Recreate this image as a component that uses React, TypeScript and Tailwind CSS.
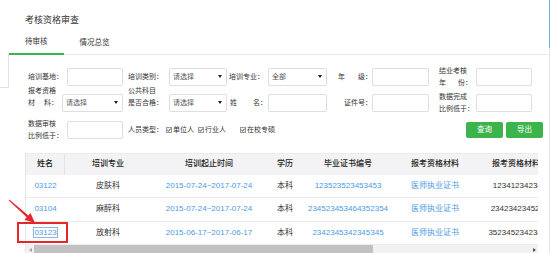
import React from 'react';

type Row = {
  name: string;
  major: string;
  period: string;
  edu: string;
  cert: string;
  material: string;
  materialNo: string;
};

const rows: Row[] = [
  { name: '03122', major: '皮肤科', period: '2015-07-24~2017-07-24', edu: '本科', cert: '123523523453453', material: '医师执业证书', materialNo: '12341234234523' },
  { name: '03104', major: '麻醉科', period: '2015-07-24~2017-07-24', edu: '本科', cert: '234523453464352354', material: '医师执业证书', materialNo: '234234234523452' },
  { name: '03123', major: '放射科', period: '2015-06-17~2017-06-17', edu: '本科', cert: '2342345342345345', material: '医师执业证书', materialNo: '3523452342345234' },
];

function TextInput({ w }: { w: string }) {
  return <div className={`${w} h-[18px] shrink-0 rounded-[2px] border border-[#dedede] bg-white`} />;
}

function Select({ w, text }: { w: string; text: string }) {
  return (
    <div className={`${w} h-[18px] shrink-0 flex items-center justify-between rounded-[2px] border border-[#dedede] bg-white pl-[3px] pr-[4px] text-[#555]`}>
      <span>{text}</span>
      <svg width="4" height="3" viewBox="0 0 4 3">
        <path d="M0 0H4L2 3Z" fill="#222" />
      </svg>
    </div>
  );
}

// label whose first and last characters are pushed to the edges (e.g. 年    级：)
function Spread({ w, a, b }: { w: string; a: string; b: string }) {
  return (
    <div className={`${w} flex justify-between`}>
      <span>{a}</span>
      <span>{b}</span>
    </div>
  );
}

function Check({ label, className }: { label: string; className?: string }) {
  return (
    <span className={`flex items-center ${className ?? ''}`}>
      <svg width="6" height="6" viewBox="0 0 6 6" className="mr-[1px]">
        <rect x="0.5" y="0.5" width="5" height="5" fill="#f4f4f4" stroke="#9a9a9a" />
        <path d="M1.3 3 L2.5 4.2 L4.8 1.6" fill="none" stroke="#333" strokeWidth="0.9" />
      </svg>
      {label}
    </span>
  );
}

export default function App() {
  return (
    <div className="relative flex w-[550px] h-[253px] overflow-hidden bg-white text-[#333] font-[family-name:'Liberation_Sans','Noto_Sans_CJK_SC',sans-serif]">
      {/* left edge of the neighbouring panel */}
      <div className="w-[9px] shrink-0 flex flex-col">
        <div className="h-[53px]" />
        <div className="h-[35px] border-r border-b border-[#e2e2e2]" />
      </div>

      <div className="flex-1 flex flex-col">
        <div className="h-[32px] pt-[14px] pl-[16px] text-[9px] leading-[12px]">考核资格审查</div>

        <div className="flex h-[23px] border-b border-[#e8e8e8] text-[7.5px]">
          <div className="-mb-px flex h-[23px] items-center border-b-2 border-[#3ab54a] px-[16px] pb-[1px]">待审核</div>
          <div className="flex h-[22px] items-center px-[16px]">情况总览</div>
        </div>

        <div className="pl-[19px] pr-[5px] text-[7px] leading-[12px]">
          <div className="mt-[13px] flex h-[18px] items-center">
            <div className="flex w-[100px] items-center">
              <div className="w-[39px]">培训基地：</div>
              <TextInput w="w-[56px]" />
            </div>
            <div className="flex w-[101px] items-center">
              <div className="w-[41px]">培训类别：</div>
              <Select w="w-[58px]" text="请选择" />
            </div>
            <div className="flex w-[109px] items-center">
              <div className="w-[39px]">培训专业：</div>
              <Select w="w-[59px]" text="全部" />
            </div>
            <div className="flex w-[101px] items-center">
              <Spread w="w-[34px]" a="年" b="级：" />
              <TextInput w="w-[57px]" />
            </div>
            <div className="flex items-center">
              <div className="w-[37px]">
                <div>结业考核</div>
                <Spread w="w-[33px]" a="年" b="份：" />
              </div>
              <TextInput w="w-[56px]" />
            </div>
          </div>

          <div className="mt-[8px] flex h-[18px] items-center">
            <div className="flex w-[100px] items-center">
              <div className="-mt-[12px] w-[34px]">
                <div>报考资格</div>
                <Spread w="w-[30px]" a="材" b="料：" />
              </div>
              <Select w="w-[61px]" text="请选择" />
            </div>
            <div className="flex w-[101px] items-center">
              <div className="-mt-[12px] w-[41px]">
                <div>公共科目</div>
                <div>是否合格：</div>
              </div>
              <Select w="w-[58px]" text="请选择" />
            </div>
            <div className="flex w-[109px] items-center">
              <div className="w-[39px] pl-[1px] pr-[1px]">
                <Spread w="w-[37px]" a="姓" b="名：" />
              </div>
              <TextInput w="w-[59px]" />
            </div>
            <div className="flex w-[101px] items-center">
              <div className="w-[34px] text-right">证件号：</div>
              <TextInput w="w-[57px]" />
            </div>
            <div className="flex items-center">
              <div className="w-[37px]">
                <div>数据完成</div>
                <div>比例低于：</div>
              </div>
              <TextInput w="w-[56px]" />
            </div>
          </div>

          <div className="mt-[9px] flex h-[18px] items-center">
            <div className="flex w-[100px] items-center">
              <div className="w-[39px]">
                <div>数据审核</div>
                <div>比例低于：</div>
              </div>
              <TextInput w="w-[56px]" />
            </div>
            <div className="flex items-center">
              <div className="w-[38px]">人员类型：</div>
              <Check label="单位人" />
              <Check label="行业人" className="ml-[4px]" />
              <Check label="在校专硕" className="ml-[14px]" />
            </div>
            <div className="ml-auto flex gap-[3px] text-[7.5px] text-white">
              <button className="flex h-[16px] w-[37px] items-center justify-center rounded-[2px] bg-[#3db44b]">查询</button>
              <button className="flex h-[16px] w-[37px] items-center justify-center rounded-[2px] bg-[#3db44b]">导出</button>
            </div>
          </div>
        </div>

        <div className="mt-[14px] ml-[16px] w-[513px] overflow-hidden border-l border-[#e6e6e6] text-[8px]">
          <div className="w-[545px]">
            <div className="flex h-[22px] items-center border-t border-[#ebebeb] bg-[#f3f3f5] font-medium text-[#222]">
              <div className="flex h-full w-[39px] items-center justify-center border-r border-[#e4e4e8]">姓名</div>
              <div className="w-[86px] text-center">培训专业</div>
              <div className="w-[116px] text-center">培训起止时间</div>
              <div className="w-[36px] text-center">学历</div>
              <div className="w-[90px] text-center">毕业证书编号</div>
              <div className="w-[84px] text-center">报考资格材料</div>
              <div className="w-[94px] text-center">报考资格材料编号</div>
            </div>
            {rows.map((r, i) => (
              <div key={r.name} className={`flex items-center border-b border-[#ececec] ${i === 1 ? 'h-[24px]' : 'h-[23px]'}`}>
                <div className="w-[39px] text-center text-[#4a9ae4]">
                  {i === 2 ? <span className="outline outline-1 outline-[#8db8e6]">{r.name}</span> : r.name}
                </div>
                <div className="w-[86px] text-center">{r.major}</div>
                <div className="w-[116px] text-center text-[#4a9ae4]">{r.period}</div>
                <div className="w-[36px] text-center">{r.edu}</div>
                <div className="w-[90px] text-center text-[#4a9ae4]">{r.cert}</div>
                <div className="w-[84px] text-center text-[#4a9ae4]">{r.material}</div>
                <div className="w-[94px] text-center">{r.materialNo}</div>
              </div>
            ))}
          </div>
          {/* horizontal scrollbar */}
          <div className="flex h-[10px] items-center bg-[#f1f1f1]">
            <div className="flex w-[8px] justify-center">
              <svg width="3" height="4" viewBox="0 0 3 4"><path d="M3 0V4L0 2Z" fill="#a0a0a0" /></svg>
            </div>
            <div className="h-full w-[339px] bg-[#c1c1c1]" />
            <div className="ml-auto flex w-[8px] justify-center">
              <svg width="3" height="4" viewBox="0 0 3 4"><path d="M0 0V4L3 2Z" fill="#505050" /></svg>
            </div>
          </div>
        </div>
      </div>

      {/* right scrollbar edge */}
      <div className="w-[2px] shrink-0 flex flex-col">
        <div className="ml-[1px] h-[48px] w-[1px] bg-[#6fb0de]" />
        <div className="ml-[1px] flex-1 w-[1px] bg-[#e4e4e4]" />
      </div>

      {/* red annotation */}
      <svg className="pointer-events-none absolute left-0 top-0" width="550" height="253">
        <polygon points="8.7,200.4 26.7,217.3 24.5,219.8 35,223 30.5,213 28.3,215.5 9.3,199.6" fill="#e5262b" />
      </svg>
      <div className="pointer-events-none absolute left-[17px] top-[222px] h-[21px] w-[51px] border-2 border-[#e5262b]" />
    </div>
  );
}
